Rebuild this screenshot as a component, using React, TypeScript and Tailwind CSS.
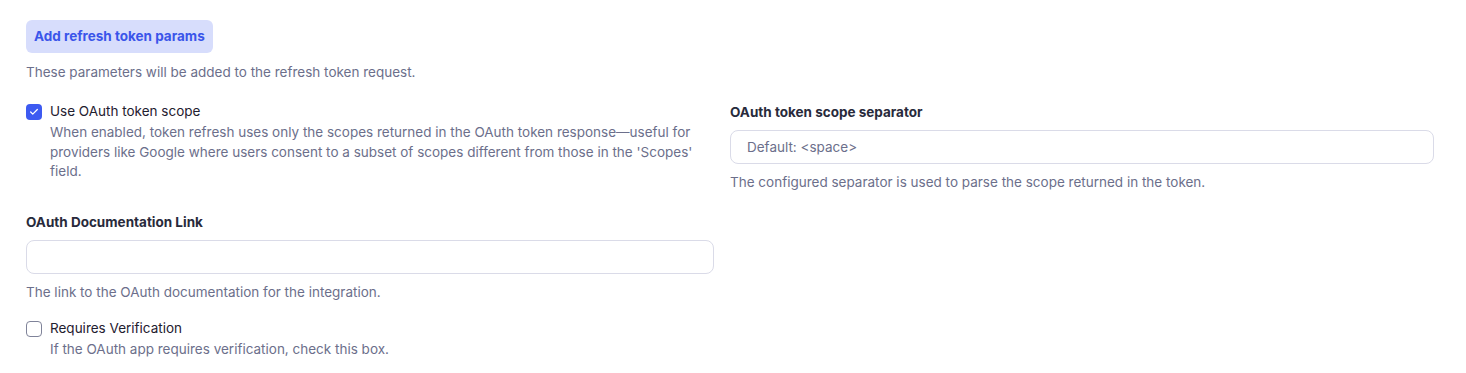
import { Check } from 'lucide-react';

function CheckRow({ checked, label, desc }: { checked: boolean; label: string; desc: string }) {
    return (
        <div className="flex gap-2">
            <div className="pt-[3px]">
                {checked ? (
                    <div className="w-4 h-4 rounded-[4px] bg-[#3d5af1] flex items-center justify-center">
                        <Check className="w-[10px] h-[10px] text-white" strokeWidth={3} />
                    </div>
                ) : (
                    <div className="w-4 h-4 rounded-[4px] border-[1.5px] border-[#7f8399] bg-white" />
                )}
            </div>
            <div className="flex flex-col">
                <span className="text-[13.5px] leading-5 text-[#1f2030]">{label}</span>
                <span className="text-[13.5px] leading-[19.5px] text-[#6c6f8b] mt-[2px]">{desc}</span>
            </div>
        </div>
    );
}

function Field({ label, placeholder, help }: { label: string; placeholder?: string; help: string }) {
    return (
        <div className="flex flex-col">
            <label className="text-[13.5px] leading-5 font-bold text-[#282a3b]">{label}</label>
            <input
                className="mt-2 h-[34px] w-full rounded-lg border border-[#dadbe8] bg-white px-4 text-[13.5px] text-[#1f2030] placeholder:text-[#6c6f8b] outline-none"
                placeholder={placeholder}
            />
            <p className="mt-2 text-[13.5px] leading-5 text-[#6c6f8b]">{help}</p>
        </div>
    );
}

export default function App() {
    return (
        <div className="min-h-[373px] bg-white pl-[26px] pt-5 font-['Inter',sans-serif]">
            <button className="h-[33px] px-2 rounded-md bg-[#d7ddfc] text-[13.5px] font-bold text-[#3a55ea]">
                Add refresh token params
            </button>
            <p className="mt-[9px] text-[13.5px] leading-5 text-[#6c6f8b]">
                These parameters will be added to the refresh token request.
            </p>

            <div className="grid grid-cols-[688px_704px] gap-x-4 mt-[19px]">
                <CheckRow
                    checked
                    label="Use OAuth token scope"
                    desc="When enabled, token refresh uses only the scopes returned in the OAuth token response—useful for providers like Google where users consent to a subset of scopes different from those in the 'Scopes' field."
                />
                <div className="pt-[1px]">
                    <Field
                        label="OAuth token scope separator"
                        placeholder="Default: <space>"
                        help="The configured separator is used to parse the scope returned in the token."
                    />
                </div>
            </div>

            <div className="w-[688px] mt-5">
                <Field label="OAuth Documentation Link" help="The link to the OAuth documentation for the integration." />
            </div>

            <div className="w-[688px] mt-4">
                <CheckRow
                    checked={false}
                    label="Requires Verification"
                    desc="If the OAuth app requires verification, check this box."
                />
            </div>
        </div>
    );
}
